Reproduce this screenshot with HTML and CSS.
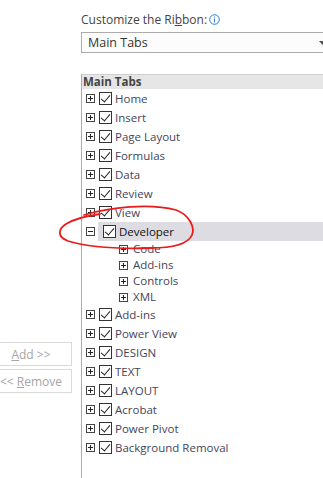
FILE: index.html
```html
<!DOCTYPE html>
<html>
<head>
<meta charset="utf-8">
<link rel="stylesheet" href="styles.css">
</head>
<body>
<div class="page">
  <div class="left">
    <div class="btn"><span><span class="u">A</span>dd &gt;&gt;</span></div>
    <div class="btn"><span>&lt;&lt; <span class="u">R</span>emove</span></div>
  </div>
  <div class="right">
    <div class="label">Customize the Ri<span class="u">b</span>bon:<svg class="info" width="11" height="11" viewBox="0 0 11 11"><circle cx="5.5" cy="5.5" r="4.8" fill="none" stroke="#2a7bd4" stroke-width="1"/><rect x="5" y="2.5" width="1" height="1" fill="#2a7bd4"/><rect x="5" y="4.5" width="1" height="4" fill="#2a7bd4"/></svg></div>
    <div class="select">
      <span>Main Tabs</span>
      <svg class="arrow" width="7" height="4" viewBox="0 0 7 4"><path d="M0 0 L7 0 L3.5 4 Z" fill="#555"/></svg>
    </div>
    <div class="list">
      <div class="head">Main Tabs</div>
      <div class="row"><span class="exp plus"></span><span class="chk"></span><span class="txt">Home</span></div>
      <div class="row"><span class="exp plus"></span><span class="chk"></span><span class="txt">Insert</span></div>
      <div class="row"><span class="exp plus"></span><span class="chk"></span><span class="txt">Page Layout</span></div>
      <div class="row"><span class="exp plus"></span><span class="chk"></span><span class="txt">Formulas</span></div>
      <div class="row"><span class="exp plus"></span><span class="chk"></span><span class="txt">Data</span></div>
      <div class="row"><span class="exp plus"></span><span class="chk"></span><span class="txt">Review</span></div>
      <div class="row"><span class="exp plus"></span><span class="chk"></span><span class="txt">View</span></div>
      <div class="row selected"><span class="exp"></span><span class="sel"><span class="chk"></span><span class="txt">Developer</span></span></div>
      <div class="row sub"><span class="exp plus"></span><span class="txt">Code</span></div>
      <div class="row sub"><span class="exp plus"></span><span class="txt">Add-ins</span></div>
      <div class="row sub"><span class="exp plus"></span><span class="txt">Controls</span></div>
      <div class="row sub"><span class="exp plus"></span><span class="txt">XML</span></div>
      <div class="row"><span class="exp plus"></span><span class="chk"></span><span class="txt">Add-ins</span></div>
      <div class="row"><span class="exp plus"></span><span class="chk"></span><span class="txt">Power View</span></div>
      <div class="row"><span class="exp plus"></span><span class="chk"></span><span class="txt">DESIGN</span></div>
      <div class="row"><span class="exp plus"></span><span class="chk"></span><span class="txt">TEXT</span></div>
      <div class="row"><span class="exp plus"></span><span class="chk"></span><span class="txt">LAYOUT</span></div>
      <div class="row"><span class="exp plus"></span><span class="chk"></span><span class="txt">Acrobat</span></div>
      <div class="row"><span class="exp plus"></span><span class="chk"></span><span class="txt">Power Pivot</span></div>
      <div class="row"><span class="exp plus"></span><span class="chk"></span><span class="txt">Background Removal</span></div>
    </div>
  </div>
  <svg class="annot" width="323" height="478" viewBox="0 0 323 478">
    <path d="M84 215 C110 207 150 203 176 210 C190 215 195 228 192 235 C188 244 172 248 150 248 C120 249 88 247 68 241 C57 237 58 229 66 224 C74 219 86 216 100 214" fill="none" stroke="#e81a1a" stroke-width="1.8" stroke-linecap="round"/>
  </svg>
</div>
</body>
</html>
```
FILE: styles.css
```css
html, body {
  margin: 0;
  padding: 0;
  background: #ffffff;
}
.page {
  position: relative;
  width: 323px;
  height: 478px;
  overflow: hidden;
  display: grid;
  grid-template-columns: 81px 1fr;
  font-family: "Segoe UI", "Open Sans", sans-serif;
  font-size: 11.5px;
  color: #444;
}
.left {
  padding-top: 342px;
  display: flex;
  flex-direction: column;
  gap: 3px;
}
.btn {
  margin-left: -10px;
  width: 80px;
  height: 22px;
  border: 1px solid #dadada;
  color: #a6a6a6;
  display: flex;
  align-items: center;
  justify-content: center;
  font-size: 12px;
  white-space: pre;
}
.u { text-decoration: underline; }
.right {
  display: flex;
  flex-direction: column;
}
.label {
  margin-top: 11px;
  height: 18px;
  line-height: 18px;
  font-size: 12px;
  color: #444;
  display: flex;
  align-items: center;
  white-space: nowrap;
}
.info { margin-left: 2px; margin-top: -2px; }
.select {
  margin-top: 3px;
  width: 250px;
  height: 19px;
  border: 1px solid #acacac;
  background: #fcfcfc;
  display: flex;
  align-items: center;
  padding-left: 6px;
  box-sizing: content-box;
  font-size: 12.5px;
  color: #333;
  position: relative;
}
.select span { flex: 1; }
.arrow { margin-right: 12px; }
.list {
  margin-top: 21px;
  border-left: 1px solid #acacac;
  border-top: 1px solid #d0d0d0;
  flex: 1;
}
.head {
  height: 14px;
  line-height: 13px;
  background: #e6e6e6;
  font-weight: bold;
  padding-left: 1px;
  font-size: 11.5px;
  color: #444;
}
.row {
  height: 19px;
  display: flex;
  align-items: center;
  white-space: nowrap;
  line-height: 17px;
}
.row.sub { height: 16px; }
.exp {
  box-sizing: border-box;
  width: 9px;
  height: 9px;
  border: 1px solid #444;
  margin-left: 4px;
  position: relative;
  flex: none;
}
.exp::before {
  content: "";
  position: absolute;
  left: 1px; top: 3px;
  width: 5px; height: 1px;
  background: #222;
}
.exp.plus::after {
  content: "";
  position: absolute;
  left: 3px; top: 1px;
  width: 1px; height: 5px;
  background: #222;
}
.sub .exp { margin-left: 37px; }
.sub .txt { margin-left: 5px; }
.chk {
  box-sizing: border-box;
  width: 13px;
  height: 13px;
  border: 1px solid #333;
  background: #fff;
  margin-left: 4px;
  flex: none;
  position: relative;
}
.chk::after {
  content: "";
  position: absolute;
  left: 3px;
  top: 0px;
  width: 4px;
  height: 8px;
  border-right: 1px solid #222;
  border-bottom: 1px solid #222;
  transform: rotate(40deg);
  transform-origin: 50% 50%;
}
.txt {
  margin-left: 3px;
  color: #45455a;
  margin-top: -1px;
}
.sel {
  display: flex;
  align-items: center;
  flex: 1;
  align-self: stretch;
  background: #dcdce2;
  margin-left: 3px;
  padding-left: 1px;
}
.sel .txt { color: #111; }
.annot {
  position: absolute;
  left: 0;
  top: 0;
  pointer-events: none;
}
```
